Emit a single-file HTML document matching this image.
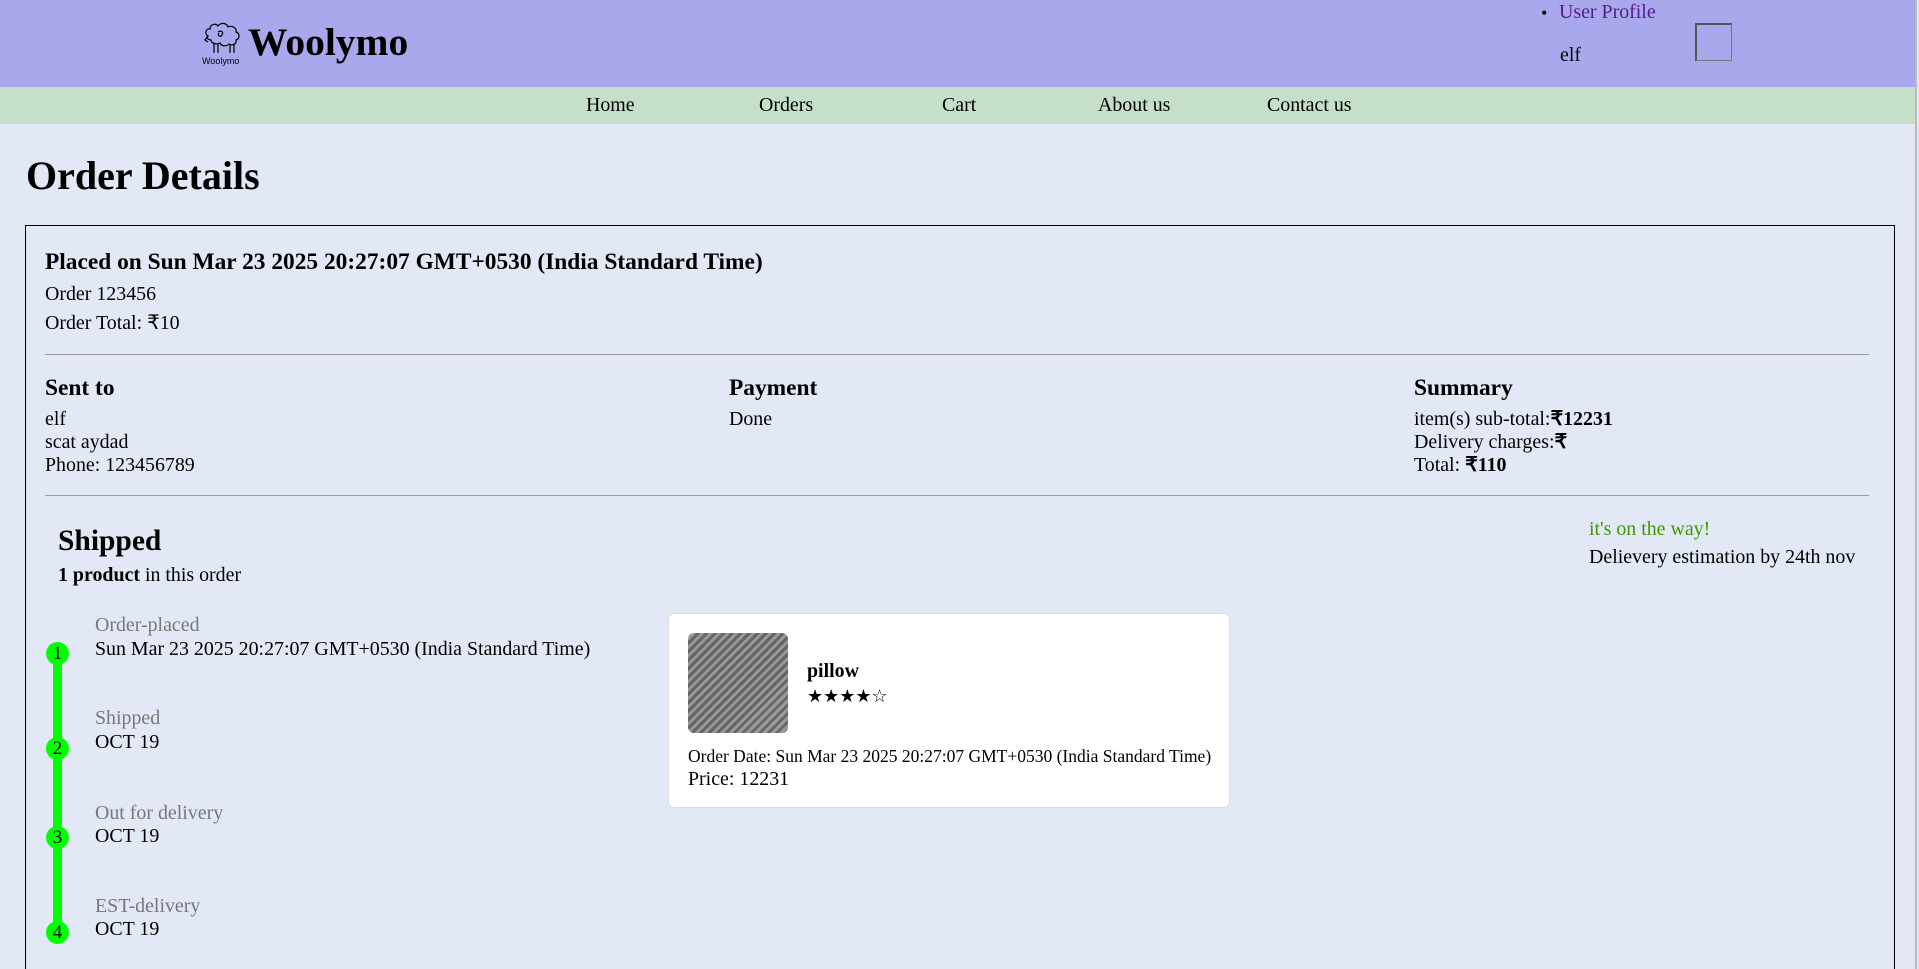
<!DOCTYPE html>
<html style="overflow:hidden;height:969px"><head><meta charset="utf-8"><style>
*{box-sizing:border-box}
body{margin:0;width:1919px;height:969px;overflow:hidden;background:#e2e8f6;font-family:"Liberation Serif",serif;font-size:19.9px;color:#000;position:relative}
.a{position:absolute;white-space:nowrap;line-height:1}
header{position:absolute;left:0;top:0;width:1915px;height:87px;background:#aaa8ec}
nav{position:absolute;left:0;top:87px;width:1915px;height:37px;background:#c5dfc9}
.g{color:#777}
.dot{position:absolute;left:46px;width:23px;height:23px;border-radius:50%;background:#00ff00;text-align:center;line-height:23px;font-size:19px}
</style></head><body>
<header></header><nav></nav>
<div style="position:absolute;right:0;top:0;width:4px;height:969px;background:#e2e8f6;border-left:2px solid #bbb"></div>
<svg class="a" style="left:202px;top:18px" width="44" height="48" viewBox="0 0 44 48"><g fill="none" stroke="#000" stroke-width="1.2"><path d="M6 18c-4-2-2-8 2-7 0-5 6-6 8-3 3-4 9-3 10 1 4-2 9 1 8 5 4 1 4 7 0 8 1 4-4 6-7 4-3 3-8 2-9-1-4 2-9 0-9-3-3 0-5-3-3-4z"/><path d="M12 25v10M16 26v9M28 27v8M32 26v9M6 18l-3 4 3 2"/><path d="M16 14c3-2 6 0 4 3s-5 0-3-2"/></g><text x="0" y="46" font-family="Liberation Sans" font-size="9">Woolymo</text></svg>
<div class="a" style="left:248px;top:23px;font-size:39.5px;font-weight:bold">Woolymo</div>
<div class="a" style="left:1541px;top:4px;font-size:18px">•</div>
<div class="a" style="left:1559px;top:3px;color:#551a8b">User Profile</div>
<div class="a" style="left:1560px;top:46px">elf</div>
<div style="position:absolute;left:1695px;top:23px;width:37px;height:38px;border:1px solid #777;border-top:2px solid #555;border-left:2px solid #555"></div>
<div class="a" style="left:586px;top:96px">Home</div>
<div class="a" style="left:759px;top:96px">Orders</div>
<div class="a" style="left:942px;top:96px">Cart</div>
<div class="a" style="left:1098px;top:96px">About us</div>
<div class="a" style="left:1267px;top:96px">Contact us</div>
<div class="a" style="left:26px;top:156px;font-size:40px;font-weight:bold">Order Details</div>
<div style="position:absolute;left:25px;top:225px;width:1870px;height:760px;border:1px solid #000"></div>
<div class="a" style="left:45px;top:251px;font-size:23.4px;font-weight:bold">Placed on Sun Mar 23 2025 20:27:07 GMT+0530 (India Standard Time)</div>
<div class="a" style="left:45px;top:285px">Order 123456</div>
<div class="a" style="left:45px;top:314px">Order Total: ₹10</div>
<div style="position:absolute;left:45px;top:354px;width:1824px;height:1px;background:#999"></div>
<div class="a" style="left:45px;top:377px;font-size:23.4px;font-weight:bold">Sent to</div>
<div class="a" style="left:729px;top:377px;font-size:23.4px;font-weight:bold">Payment</div>
<div class="a" style="left:1414px;top:377px;font-size:23.4px;font-weight:bold">Summary</div>
<div class="a" style="left:45px;top:410px">elf</div>
<div class="a" style="left:45px;top:433px">scat aydad</div>
<div class="a" style="left:45px;top:456px">Phone: 123456789</div>
<div class="a" style="left:729px;top:410px">Done</div>
<div class="a" style="left:1414px;top:410px">item(s) sub-total:<b>₹12231</b></div>
<div class="a" style="left:1414px;top:433px">Delivery charges:<b>₹</b></div>
<div class="a" style="left:1414px;top:456px">Total: <b>₹110</b></div>
<div style="position:absolute;left:45px;top:495px;width:1824px;height:1px;background:#999"></div>
<div class="a" style="left:58px;top:527px;font-size:29.5px;font-weight:bold">Shipped</div>
<div class="a" style="left:58px;top:566px"><b>1 product</b> in this order</div>
<div class="a" style="left:1589px;top:520px;color:#3a9a00">it's on the way!</div>
<div class="a" style="left:1589px;top:548px">Delievery estimation by 24th nov</div>
<div style="position:absolute;left:53px;top:654px;width:9px;height:280px;background:#00ff00"></div>
<div class="dot" style="top:642px">1</div>
<div class="dot" style="top:737px">2</div>
<div class="dot" style="top:826px">3</div>
<div class="dot" style="top:921px">4</div>
<div class="a g" style="left:95px;top:616px">Order-placed</div>
<div class="a" style="left:95px;top:640px">Sun Mar 23 2025 20:27:07 GMT+0530 (India Standard Time)</div>
<div class="a g" style="left:95px;top:709px">Shipped</div>
<div class="a" style="left:95px;top:733px">OCT 19</div>
<div class="a g" style="left:95px;top:804px">Out for delivery</div>
<div class="a" style="left:95px;top:827px">OCT 19</div>
<div class="a g" style="left:95px;top:897px">EST-delivery</div>
<div class="a" style="left:95px;top:920px">OCT 19</div>
<div style="position:absolute;left:668px;top:613px;width:562px;height:195px;background:#fff;border:1px solid #ddd;border-radius:6px"></div>
<div style="position:absolute;left:688px;top:633px;width:100px;height:100px;border-radius:6px;background:repeating-linear-gradient(135deg,#666 0 3px,#9a9a9a 3px 6px),#777"></div>
<div class="a" style="left:807px;top:662px;font-weight:bold">pillow</div>
<div class="a" style="left:807px;top:687px;font-size:18px">★★★★☆</div>
<div class="a" style="left:688px;top:748px;font-size:17.5px">Order Date: Sun Mar 23 2025 20:27:07 GMT+0530 (India Standard Time)</div>
<div class="a" style="left:688px;top:770px">Price: 12231</div>
</body></html>
